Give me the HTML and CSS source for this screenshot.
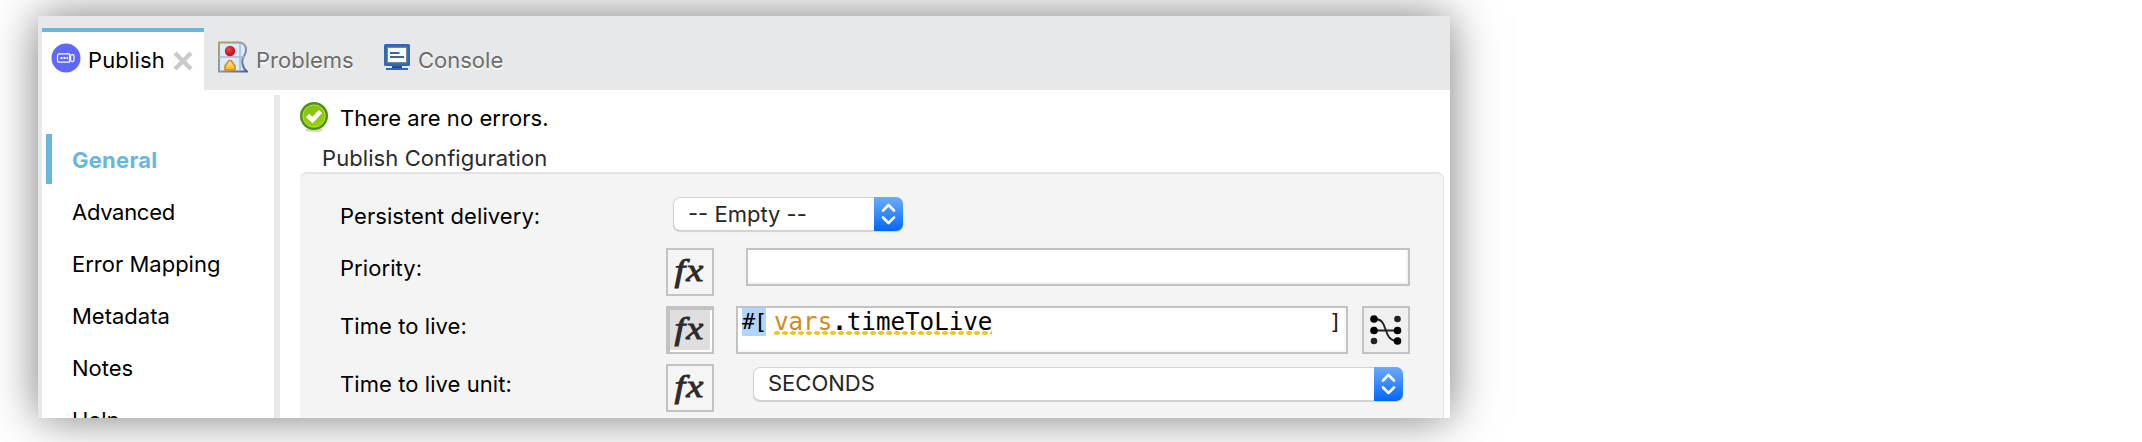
FILE: index.html
```html
<!DOCTYPE html>
<html lang="en">
<head>
<meta charset="utf-8">
<title>Publish</title>
<link rel="stylesheet" href="styles.css">
</head>
<body>
<div class="window">
  <div class="tabs">
    <div class="tab tab-active">
      <svg class="tab-icon" width="30" height="30" viewBox="0 0 30 30"><circle cx="15" cy="15" r="14.5" fill="#5f68fa"/><g fill="none" stroke="#fff" stroke-width="1.2"><path d="M18.500 10.800H8.500q-2 0-2 2v4.400q0 2 2 2H18.500z"/><rect x="19.600" y="11.600" width="3.400" height="7" rx="1.500"/></g><path d="M9.500 14h2v2h-2zM12.500 14h2v2h-2zM15.500 14h1.400v2H15.500z" fill="#fff"/></svg>
      <span class="tab-name t-publish">Publish</span>
      <svg class="close" width="20" height="20" viewBox="0 0 20 20"><path d="M2 2l16 16M18 2l-16 16" stroke="#cacaca" stroke-width="4.400"/></svg>
    </div>
    <div class="tab tab-problems">
      <svg class="tab-icon" width="30" height="32" viewBox="0 0 30 32"><defs><linearGradient id="pg" x1="0" y1="0" x2="1" y2="1"><stop offset="0" stop-color="#b9a04e"/><stop offset=".5" stop-color="#8e97ad"/><stop offset="1" stop-color="#4c6398"/></linearGradient><radialGradient id="rd" cx=".4" cy=".35"><stop offset="0" stop-color="#f04a4e"/><stop offset="1" stop-color="#c9141c"/></radialGradient><linearGradient id="yl" x1="0" y1="0" x2="0" y2="1"><stop offset="0" stop-color="#fff2a8"/><stop offset="1" stop-color="#f2b417"/></linearGradient></defs><path d="M1 1.500H22Q28 2.500 28 9Q28 12 26 15Q23.500 19 24.500 23Q25.500 28 29 30.500H1z" fill="#d9ecfb" stroke="url(#pg)" stroke-width="2"/><path d="M1 16H26M22 2V30" stroke="#a4b8d8" stroke-width="1.400"/><circle cx="12" cy="10" r="5.200" fill="url(#rd)"/><path d="M7 29V25L11 19.500H13L17 25V29z" fill="url(#yl)" stroke="#dd8c1c" stroke-width="1.700" stroke-linejoin="round"/></svg>
      <span class="tab-name t-problems">Problems</span>
    </div>
    <div class="tab tab-console">
      <svg class="tab-icon" width="26" height="27" viewBox="0 0 26 27"><rect x="0" y="0" width="26" height="22" rx="1.500" fill="#2d69b5"/><rect x="2.800" y="2.800" width="20.400" height="16.400" fill="#78849b"/><rect x="4" y="4" width="18" height="14" fill="#f5fbff"/><path d="M6 9H15.500M6 13H20" stroke="#4a5f97" stroke-width="1.800"/><path d="M8 22H18V24H8z" fill="#234f8d"/><path d="M2 24H24V26H2z" fill="#2d69b5"/></svg>
      <span class="tab-name t-console">Console</span>
    </div>
  </div>
  <div class="body">
    <nav class="side">
      <div class="item selected"><span>General</span></div>
      <div class="item"><span class="tight">Advanced</span></div>
      <div class="item"><span>Error Mapping</span></div>
      <div class="item"><span>Metadata</span></div>
      <div class="item"><span>Notes</span></div>
      <div class="item"><span>Help</span></div>
    </nav>
    <div class="sash"></div>
    <main class="main">
      <div class="status">
        <svg width="30" height="32" viewBox="0 0 30 32"><defs><linearGradient id="gg" x1="0" y1="0" x2="0" y2="1"><stop offset="0" stop-color="#86bd14"/><stop offset="1" stop-color="#9ad400"/></linearGradient></defs><ellipse cx="14" cy="29" rx="9" ry="2" fill="#d4dbc8"/><circle cx="14" cy="15" r="12.800" fill="url(#gg)" stroke="#4d9318" stroke-width="2.400"/><circle cx="14" cy="15" r="11" fill="none" stroke="#aedb4c" stroke-width="1"/><path d="M7.500 14.500L12.500 19L20.500 10.500" fill="none" stroke="#fff" stroke-width="4.600"/></svg>
        <span>There are no errors.</span>
      </div>
      <div class="legend"><span>Publish Configuration</span></div>
      <div class="group">
        <div class="row row-first">
          <label>Persistent delivery:</label>
          <div class="combo combo-small"><span>-- Empty --</span><div class="arrows"><svg width="29" height="34" viewBox="0 0 29 34"><path d="M9 13.500L14.500 8L20 13.500M9 20.500L14.500 26L20 20.500" fill="none" stroke="#fff" stroke-width="2.600" stroke-linecap="round" stroke-linejoin="round"/></svg></div></div>
        </div>
        <div class="row">
          <label>Priority:</label>
          <button class="fx"><span>fx</span></button>
          <div class="input"></div>
        </div>
        <div class="row">
          <label>Time to live:</label>
          <button class="fx pressed"><span>fx</span></button>
          <div class="expr"><span class="open">#[</span><span class="code"><span class="kw">vars</span><b>.</b>timeToLive</span><span class="end">]</span></div>
          <button class="map"><svg width="32" height="32" viewBox="0 0 32 32"><path d="M4 5C20 4 11 27 28 27M4 16.500H28" fill="none" stroke="#222" stroke-width="1.900"/><g fill="#000"><circle cx="4" cy="5" r="3.800"/><circle cx="4" cy="16.500" r="3.800"/><circle cx="4" cy="27" r="3.300" fill="#222"/><circle cx="27.500" cy="5" r="3.300" fill="#222"/><circle cx="27.500" cy="16.500" r="3.800"/><circle cx="27.500" cy="27" r="3.800"/></g></svg></button>
        </div>
        <div class="row">
          <label>Time to live unit:</label>
          <button class="fx"><span>fx</span></button>
          <div class="combo combo-wide"><span>SECONDS</span><div class="arrows"><svg width="29" height="34" viewBox="0 0 29 34"><path d="M9 13.500L14.500 8L20 13.500M9 20.500L14.500 26L20 20.500" fill="none" stroke="#fff" stroke-width="2.600" stroke-linecap="round" stroke-linejoin="round"/></svg></div></div>
        </div>
      </div>
    </main>
  </div>
</div>
</body>
</html>
```
FILE: styles.css
```css
* { box-sizing: border-box; }
html, body { margin: 0; height: 442px; overflow: hidden; background: #fff; }
body { font: 22px/28px Inter, sans-serif; color: #000; display: flex; white-space: nowrap; }
button { font: inherit; color: inherit; padding: 0; margin: 0; border-radius: 0; }
svg { display: block; flex: none; }

.window { display: flex; flex-direction: column; width: 1412px; height: 402px; margin: 16px 0 0 38px; border-left: 4px solid #e7e8ea; background: #fff; box-shadow: 0 0 44px rgba(0,0,0,.52); }

.tabs { display: flex; height: 74px; flex: none; padding-top: 12px; background: #e7e8ea; }
.tab { display: flex; align-items: flex-start; color: #6d6d6d; text-shadow: 0 2px 0 #fafafa; }
.tab-name { margin-top: 18px; }
.tab-active { width: 162px; background: #fff; border-top: 4px solid #69b7df; padding-left: 9px; color: #000; text-shadow: none; }
.tab-active .tab-icon { margin-top: 11px; }
.tab-active .tab-name { margin: 14px 0 0 7px; width: 76px; letter-spacing: .15px; }
.close { margin: 19px 0 0 9px; }
.tab-problems { padding-left: 14px; }
.tab-problems .tab-icon { margin-top: 13px; }
.tab-problems .tab-name { margin-left: 8px; width: 98px; }
.tab-console { padding-left: 30px; }
.tab-console .tab-icon { margin-top: 16px; }
.tab-console .tab-name { margin-left: 8px; }

.body { display: flex; height: 328px; overflow: hidden; }
.side { width: 232px; padding: 44px 0 0 4px; }
.item { height: 50px; margin-bottom: 2px; padding: 12px 0 0 20px; border-left: 6px solid transparent; }
.tight { letter-spacing: -.3px; }
.selected { border-color: #69b7df; color: #69b7df; font-weight: 700; letter-spacing: .25px; }
.sash { width: 6px; margin-top: 5px; background: #e7e8ea; }

.main { width: 1170px; padding: 11px 6px 0 20px; }
.status { display: flex; gap: 10px; height: 41px; align-items: flex-start; letter-spacing: .06px; }
.status span { margin-top: 3px; }
.legend { height: 30px; padding: 2px 0 0 22px; color: #2b2b2b; letter-spacing: .08px; }
.group { height: 260px; padding: 23px 33px 0 40px; background: #f4f4f4; border: 1px solid #e3e3e3; border-radius: 7px; border-width: 2px 1px 1px; border-left-width: 0; }
.row { display: flex; align-items: flex-start; height: 48px; margin-bottom: 10px; }
.row label { width: 326px; margin-top: 6px; letter-spacing: .07px; }
.row-first { height: 51px; margin-bottom: 0; }
.row-first label { width: 333px; margin-top: 5px; }

.combo { display: flex; justify-content: space-between; align-items: flex-start; height: 34px; padding-left: 15px; background: #fff; border-radius: 7px; box-shadow: 0 0 0 1px #d3d3d3 inset, 0 -1px 0 #a8a8a8 inset, 0 1px 1px rgba(0,0,0,.15); color: #262626; overflow: hidden; }
.combo span { margin-top: 3px; }
.combo-small { width: 230px; }
.combo-wide { width: 650px; margin: 3px 0 0 39px; }
.combo-wide span { margin-top: 2px; }
.arrows { width: 29px; height: 34px; background: linear-gradient(#6dabfb, #0267ff); }

.fx, .map { width: 48px; height: 48px; flex: none; border: 2px solid #c2c2c2; background: #f5f5f5; }
.fx { font: italic 32px/40px "Liberation Serif", serif; color: #2d2a2c; padding: 0 0 6px; }
.fx span { display: inline-block; transform: scaleX(1.2); letter-spacing: 1px; -webkit-text-stroke: .9px #2d2a2c; }
.pressed { background: #dfdfdf; box-shadow: 2px 2px 0 #c2c2c2 inset, -2px -2px 0 #fff inset; }
.map { padding-left: 6px; background: #f0f0f0; }
.input { width: 664px; height: 38px; margin-left: 32px; border: 2px solid #c2c2c2; background: #fff; box-shadow: -2px -2px 0 #f3f3f3 inset; }

.expr { display: flex; align-items: flex-start; width: 612px; height: 48px; margin: 0 14px 0 22px; padding-left: 4px; border: 2px solid #c2c2c2; background: #fff; box-shadow: -2px -2px 0 #f8f8f8 inset; font: 22px/28px "DejaVu Sans Mono", monospace; }
.open { width: 24px; background: #b0d4fe; letter-spacing: -1.2px; }
.code { margin-left: 8px; height: 28px; font-size: 24.200px; line-height: 29px; background: radial-gradient(ellipse 3.200px 2px at 3px 2px, #efc62e 85%, transparent 100%) 0 23px / 8px 4px repeat-x; }
.kw { color: #cd8c1c; }
.end { margin: 0 4px 0 auto; color: #222; }
```
